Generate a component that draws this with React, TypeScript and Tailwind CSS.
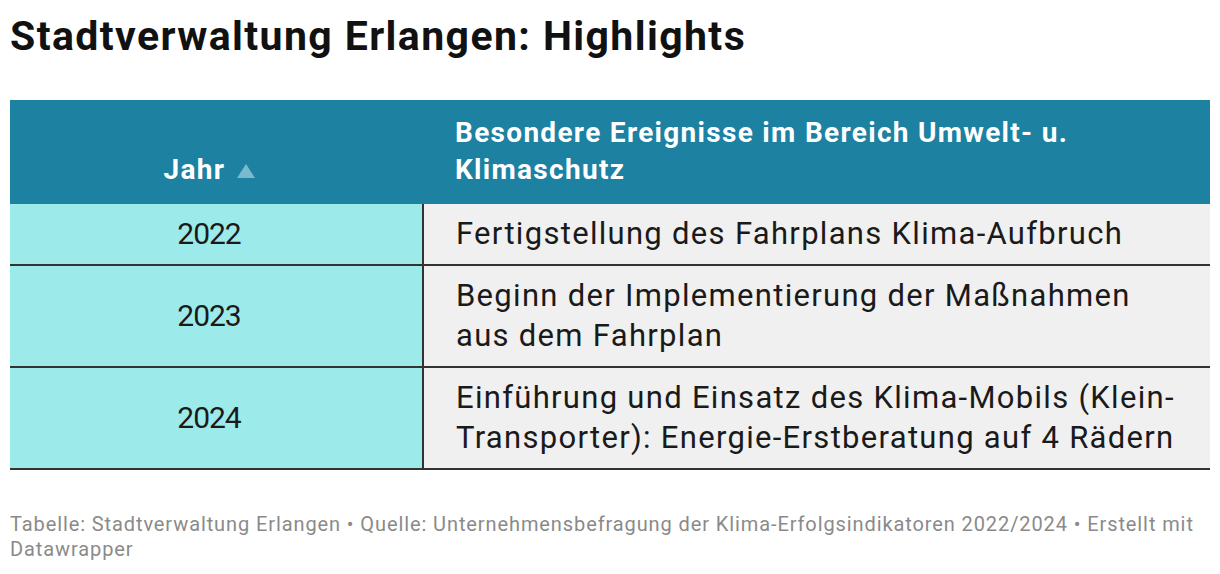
const rows = [
  { year: '2022', text: 'Fertigstellung des Fahrplans Klima-Aufbruch' },
  { year: '2023', text: 'Beginn der Implementierung der Maßnahmen aus dem Fahrplan' },
  {
    year: '2024',
    text: 'Einführung und Einsatz des Klima-Mobils (Klein-Transporter): Energie-Erstberatung auf 4 Rädern',
  },
];

export default function App() {
  return (
    <div className="w-[1220px] h-[574px] bg-white px-[10px] pt-[12px] font-['Roboto',sans-serif] text-[#1a1a1a]">
      <h1 className="text-[41px] font-bold leading-[48px] tracking-[1.4px] text-[#111]">
        Stadtverwaltung Erlangen: Highlights
      </h1>
      <table className="mt-[40px] w-[1200px] border-collapse">
        <thead>
          <tr className="bg-[#1d81a1] text-white">
            <th className="w-[413px] h-[104px] align-bottom pb-[16px] pr-[14px] text-center text-[28px] font-bold leading-[37px] tracking-[1.3px]">
              <span className="inline-flex items-center gap-[12px]">
                Jahr
                <svg width="18" height="14" viewBox="0 0 18 14" className="mt-[2px]">
                  <polygon points="9,0 18,14 0,14" fill="#7bbacc" />
                </svg>
              </span>
            </th>
            <th className="align-bottom pb-[16px] pl-[32px] pr-[30px] text-left text-[28px] font-bold leading-[37px] tracking-[1.3px]">
              Besondere Ereignisse im Bereich Umwelt- u. Klimaschutz
            </th>
          </tr>
        </thead>
        <tbody>
          {rows.map((r) => (
            <tr key={r.year} className="border-b-2 border-[#333]">
              <td className="bg-[#9deaeb] pr-[14px] text-center text-[30px] leading-[40px] tracking-[-1px] py-[10px] border-r-2 border-[#333]">
                {r.year}
              </td>
              <td className="bg-[#f0f0f0] text-[31px] leading-[40px] tracking-[1.3px] py-[10px] pl-[32px] pr-[30px]">
                {r.text}
              </td>
            </tr>
          ))}
        </tbody>
      </table>
      <p className="mt-[42px] text-[20px] leading-[25px] tracking-[0.9px] text-[#8a8a8a]">
        Tabelle: Stadtverwaltung Erlangen • Quelle: Unternehmensbefragung der Klima-Erfolgsindikatoren 2022/2024 • Erstellt mit Datawrapper
      </p>
    </div>
  );
}
